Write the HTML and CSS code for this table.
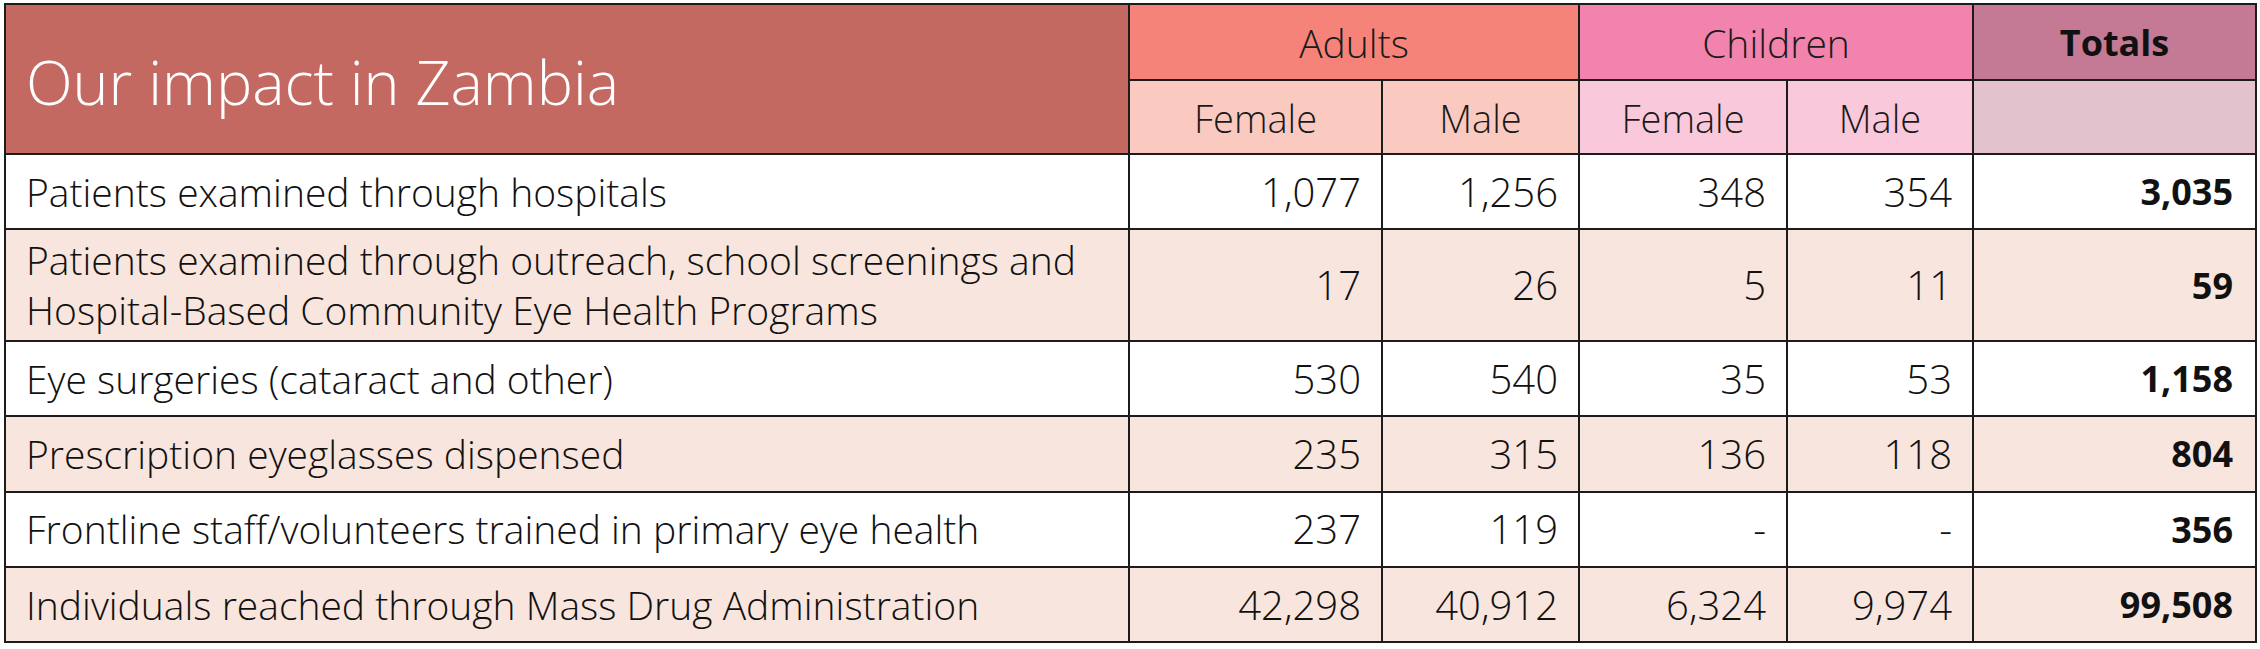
FILE: index.html
```html
<!DOCTYPE html>
<html lang="en">
<head>
<meta charset="utf-8">
<title>Our impact in Zambia</title>
<link rel="stylesheet" href="styles.css">
</head>
<body>
<table class="impact">
  <colgroup>
    <col class="c-label">
    <col class="c-af">
    <col class="c-am">
    <col class="c-cf">
    <col class="c-cm">
    <col class="c-tot">
  </colgroup>
  <thead>
    <tr class="h-top">
      <th class="title" rowspan="2">Our impact in Zambia</th>
      <th class="grp adults" colspan="2">Adults</th>
      <th class="grp children" colspan="2">Children</th>
      <th class="grp totals">Totals</th>
    </tr>
    <tr class="h-sub">
      <th class="sub adults-sub">Female</th>
      <th class="sub adults-sub">Male</th>
      <th class="sub children-sub">Female</th>
      <th class="sub children-sub">Male</th>
      <th class="sub totals-sub"></th>
    </tr>
  </thead>
  <tbody>
    <tr class="r-plain">
      <td class="label">Patients examined through hospitals</td>
      <td>1,077</td><td>1,256</td><td>348</td><td>354</td><td class="tot">3,035</td>
    </tr>
    <tr class="r-tint r-tall">
      <td class="label">Patients examined through outreach, school screenings and<br>Hospital-Based Community Eye Health Programs</td>
      <td>17</td><td>26</td><td>5</td><td>11</td><td class="tot">59</td>
    </tr>
    <tr class="r-plain">
      <td class="label">Eye surgeries (cataract and other)</td>
      <td>530</td><td>540</td><td>35</td><td>53</td><td class="tot">1,158</td>
    </tr>
    <tr class="r-tint">
      <td class="label">Prescription eyeglasses dispensed</td>
      <td>235</td><td>315</td><td>136</td><td>118</td><td class="tot">804</td>
    </tr>
    <tr class="r-plain">
      <td class="label">Frontline staff/volunteers trained in primary eye health</td>
      <td>237</td><td>119</td><td>-</td><td>-</td><td class="tot">356</td>
    </tr>
    <tr class="r-tint">
      <td class="label">Individuals reached through Mass Drug Administration</td>
      <td>42,298</td><td>40,912</td><td>6,324</td><td>9,974</td><td class="tot">99,508</td>
    </tr>
  </tbody>
</table>
</body>
</html>
```
FILE: styles.css
```css
html, body {
  margin: 0;
  padding: 0;
  background: #ffffff;
}
body {
  padding: 3px 0 0 4px;
  font-family: "Open Sans", "Liberation Sans", sans-serif;
  font-weight: 300;
  color: #111111;
}
.impact {
  border-collapse: collapse;
  table-layout: fixed;
  width: 2252px;
  border: 2px solid #1c1c1c;
}
.c-label { width: 1124px; }
.c-af { width: 253px; }
.c-am { width: 197px; }
.c-cf { width: 208px; }
.c-cm { width: 186px; }
.c-tot { width: 283px; }

.impact th, .impact td {
  border: 2px solid #1c1c1c;
  padding: 0;
  font-weight: 300;
  vertical-align: middle;
  line-height: 1.2;
}
.h-top { height: 76px; }
.h-sub { height: 74px; }

.impact th.title {
  background: #c46862;
  color: #ffffff;
  text-align: left;
  padding-left: 20px;
  padding-top: 6px;
  font-size: 61px;
}
.impact th.grp {
  font-size: 39px;
  color: #1a1a1a;
  text-align: center;
  padding-top: 2px;
}
.adults { background: #f5837a; }
.children { background: #f283ac; }
.impact th.totals {
  background: #c47a94;
  font-weight: 700;
  font-size: 36px;
  color: #111111;
}
.impact th.sub {
  font-size: 38px;
  text-align: center;
  color: #1a1a1a;
  padding-top: 4px;
}
.adults-sub { background: #facac1; }
.children-sub { background: #f9c8da; }
.totals-sub { background: #e2c3cd; }

.impact td {
  font-size: 40px;
  text-align: right;
  padding-right: 20px;
  height: 73.4px;
}
.impact .r-tall td { height: 109.5px; }
.r-plain { background: #ffffff; }
.r-tint { background: #f8e5dd; }
.impact td.label {
  font-size: 39px;
  text-align: left;
  padding-left: 20px;
  padding-right: 0;
  line-height: 50px;
}
.impact td.tot {
  font-weight: 700;
  font-size: 36px;
  padding-right: 22px;
}
```
